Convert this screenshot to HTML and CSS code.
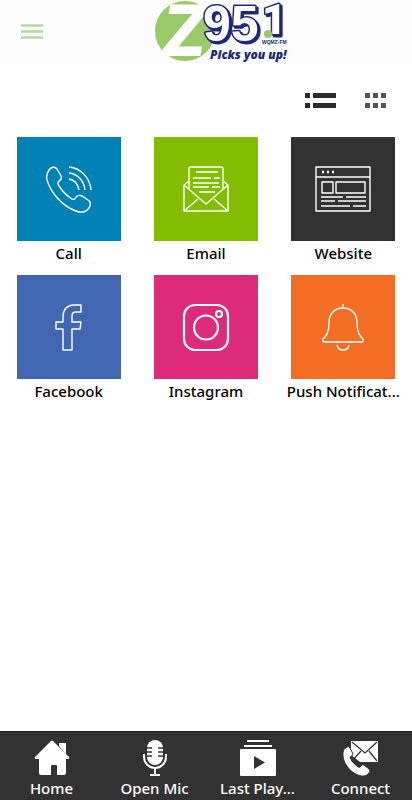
FILE: index.html
```html
<!DOCTYPE html>
<html lang="en">
<head>
    <meta charset="UTF-8">
    <meta name="viewport" content="width=device-width, initial-scale=1.0">
    <title>Z95.1 WQMZ-FM</title>
    <link rel="stylesheet" href="styles.css">
</head>
<body>
    <header class="header">
        <button class="menu-button" type="button" aria-label="Menu">
            <svg width="22" height="16" viewBox="0 0 22 16"><path d="M0 1.5h22M0 7.5h22M0 13.5h22" stroke="#b9d8a0" stroke-width="2.4"/></svg>
        </button>
        <svg class="logo" width="132" height="64" viewBox="14 0 132 64" role="img" aria-label="Z95.1 Picks you up!">
            <circle cx="45" cy="31" r="30" fill="#98cb68"/>
            <text class="logo-z" x="23" y="56">Z</text>
            <g class="logo-digits">
                <text x="63" y="41">95</text>
                <text x="122" y="34" class="logo-one">1</text>
            </g>
            <circle cx="128" cy="34" r="4" fill="#98cb68"/>
            <text class="logo-call" x="122" y="44">WQMZ-FM</text>
            <text class="logo-slogan" x="70" y="59">Picks you up!</text>
        </svg>
    </header>

    <main class="content">
        <div class="view-switch">
            <button type="button" aria-label="List view">
                <svg width="31" height="16" viewBox="0 0 31 16" fill="#2b2b2b"><path d="M0 0h5v5H0zM8 0h23v5H8zM0 10h5v5H0zM8 10h23v5H8z"/></svg>
            </button>
            <button type="button" aria-label="Grid view">
                <svg width="22" height="16" viewBox="0 0 22 16" fill="#555"><path d="M0 0h5v5H0zM8 0h5v5H8zM16 0h5v5h-5zM0 10h5v5H0zM8 10h5v5H8zM16 10h5v5h-5z"/></svg>
            </button>
        </div>

        <nav class="tiles">
            <a class="tile" href="#call">
                <span class="tile-icon call">
                    <svg viewBox="0 0 48 48">
                        <path d="M4 5C6 2 10 1 12 4l4 7c1 2 0 4-2 5-2 2-1 3 0 5 4 6 8 10 13 13 2 1 3 0 4-2 2-2 4-2 6-1l6 4c3 2 3 5 1 8-3 4-8 5-13 3C17 41 6 28 2 15 1 11 2 8 4 5z"/>
                        <path d="M24 2c12 1 21 11 22 23M24 8c9 1 15 8 16 17M24 14c6 1 9 5 10 11"/>
                    </svg>
                </span>
                <span class="label">Call</span>
            </a>
            <a class="tile" href="#email">
                <span class="tile-icon email">
                    <svg viewBox="0 0 48 48">
                        <path d="M2 20v26h44V20L24 39zM2 20l5-4M46 20l-5-4M7 24V4q0-2 2-2h30q2 0 2 2v20M2 46l14-12M46 46L32 34"/>
                        <path d="M14 7h22M11 13h18M32 13h6M11 18h26M11 22h16M30 22h8M17 27h16"/>
                    </svg>
                </span>
                <span class="label">Email</span>
            </a>
            <a class="tile" href="#website">
                <span class="tile-icon website">
                    <svg class="wide" viewBox="0 0 56 48">
                        <path d="M1 2h54v44H1zM1 12h54M7 17h11v11H7zM21 17h29v11H21zM6 32h22M31 32h20M6 36h14M23 36h28M6 41h29M38 41h13"/>
                        <path d="M7 7h2M12 7h2M17 7h2" stroke-width="2.5"/>
                    </svg>
                </span>
                <span class="label">Website</span>
            </a>
            <a class="tile" href="#facebook">
                <span class="tile-icon facebook">
                    <svg viewBox="0 0 48 48">
                        <path d="M36 2v7h-5q-4 0-4 4v6h9l-1 7h-8v21h-9V26h-7v-7h7v-6Q19 2 29 2z"/>
                    </svg>
                </span>
                <span class="label">Facebook</span>
            </a>
            <a class="tile" href="#instagram">
                <span class="tile-icon instagram">
                    <svg viewBox="0 0 48 48">
                        <rect x="2" y="2" width="44" height="45" rx="11"/>
                        <circle cx="24" cy="24.5" r="12"/>
                        <circle cx="37" cy="11" r="3"/>
                    </svg>
                </span>
                <span class="label">Instagram</span>
            </a>
            <a class="tile" href="#push">
                <span class="tile-icon push">
                    <svg viewBox="0 0 48 48">
                        <path d="M24 5C14 5 10 12 10 20c0 10-3 13-6 16-1 2 0 3 2 3h36c2 0 3-1 2-3-3-3-6-6-6-16 0-8-4-15-14-15zM24 5V1M18 42q1 5 6 5t6-5"/>
                    </svg>
                </span>
                <span class="label">Push Notificat...</span>
            </a>
        </nav>
    </main>

    <nav class="tab-bar">
        <a class="tab" href="#home">
            <svg width="36" height="36" viewBox="0 0 36 36" fill="#fff">
                <path d="M17 1q1-1 2 0l16 16q1 2-1 2h-2v14q0 2-2 2h-7V26q0-1-1-1h-4q-1 0-1 1v9H7q-2 0-2-2V19H2q-2 0-1-2zM25 3h7v11L25 6z"/>
            </svg>
            <span>Home</span>
        </a>
        <a class="tab" href="#open-mic">
            <svg width="36" height="36" viewBox="0 0 36 36" fill="none">
                <rect x="10" y="0" width="16" height="25" rx="8" fill="#fff"/>
                <path d="M10 8h5M10 12h5M10 16h5M21 8h5M21 12h5M21 16h5" stroke="#323232" stroke-width="1.4"/>
                <path d="M7 14v3a11 11 0 0 0 22 0v-3M18 28v6M13 35h10" stroke="#fff" stroke-width="2"/>
            </svg>
            <span>Open Mic</span>
        </a>
        <a class="tab" href="#last-played">
            <svg width="36" height="36" viewBox="0 0 36 36" fill="#fff">
                <path d="M7 0h22v2H7zM4 5h28v2H4zM1 9h34q1 0 1 1v25q0 1-1 1H1q-1 0-1-1V10q0-1 1-1z"/>
                <path d="M14 16v13l11-6.5z" fill="#323232"/>
            </svg>
            <span>Last Play...</span>
        </a>
        <a class="tab" href="#connect">
            <svg width="36" height="36" viewBox="0 0 36 36">
                <path d="M8 1h27v21H17L8 15z" fill="#fff"/>
                <path d="M9 2l13 11L34 2M9 21l9-10M34 21l-8-10" fill="none" stroke="#323232" stroke-width="1.3"/>
                <path d="M1 9l3-2q2-1 3 1l3 6q0 2-3 3 1 5 8 10 2 1 3-1 1-2 3-1l5 4q2 2 0 4-4 5-11 2C5 31-3 19 1 9z" fill="#fff" stroke="#323232" stroke-width="1"/>
            </svg>
            <span>Connect</span>
        </a>
    </nav>
</body>
</html>
```
FILE: styles.css
```css
* {
    box-sizing: border-box;
}

body {
    font-family: "Noto Sans", sans-serif;
    font-weight: 500;
    background-color: #fff;
    margin: 0;
    min-height: 100vh;
    display: flex;
    flex-direction: column;
}

button {
    background: none;
    border: none;
    padding: 0;
    cursor: pointer;
}

svg {
    display: block;
}

a {
    color: inherit;
    text-decoration: none;
}

.header {
    display: grid;
    grid-template-columns: 1fr auto 1fr;
    align-items: center;
    height: 64px;
    background-color: #fcfcfc;
}

.menu-button {
    justify-self: start;
    padding-left: 21px;
}

.logo {
    margin-left: 28px;
    overflow: visible;
}

.logo-z {
    font: italic 900 72px Roboto, sans-serif;
    fill: #fff;
}

/* white digits with a navy outline and a hard shadow to the lower right */
.logo-digits {
    font: 700 50px "Liberation Sans", sans-serif;
    fill: #fff;
    stroke: #20287c;
    stroke-width: 3px;
    stroke-linejoin: round;
    paint-order: stroke;
    filter: drop-shadow(2px 2px 0 #20287c);
}

.logo-one {
    font: 900 42px Roboto, sans-serif;
}

.logo-call {
    font: 700 5px "Liberation Sans", sans-serif;
    fill: #20287c;
}

.logo-slogan {
    font: italic 800 12px "Open Sans", sans-serif;
    fill: #20287c;
}

.content {
    flex: 1;
}

.view-switch {
    display: flex;
    justify-content: flex-end;
    gap: 29px;
    padding: 29px 25px 28px;
}

.tiles {
    display: grid;
    grid-template-columns: repeat(3, 1fr);
    row-gap: 10px;
}

.tile {
    display: flex;
    flex-direction: column;
    align-items: center;
}

.tile-icon {
    display: flex;
    align-items: center;
    justify-content: center;
    width: 104px;
    height: 104px;
}

.tile-icon svg {
    width: 48px;
    height: 48px;
    fill: none;
    stroke: #fff;
    stroke-width: 1.4;
    stroke-linejoin: round;
}

.tile-icon svg.wide {
    width: 56px;
}

.call { background-color: #0082b6; }
.email { background-color: #82bd02; }
.website { background-color: #323232; }
.facebook { background-color: #4267b2; }
.instagram { background-color: #dd2a7b; }
.push { background-color: #f36e24; }

.tile-icon.instagram svg {
    stroke-width: 2.2;
}

.label {
    color: #000;
    font-size: 15px;
    line-height: 24px;
    white-space: nowrap;
}

.tab-bar {
    display: grid;
    grid-template-columns: repeat(4, 1fr);
    background-color: #323232;
    border-top: 1px solid #222;
    color: #fff;
}

.tab {
    display: flex;
    flex-direction: column;
    align-items: center;
    padding-top: 8px;
    font-size: 15px;
    line-height: 24px;
    white-space: nowrap;
}
```
